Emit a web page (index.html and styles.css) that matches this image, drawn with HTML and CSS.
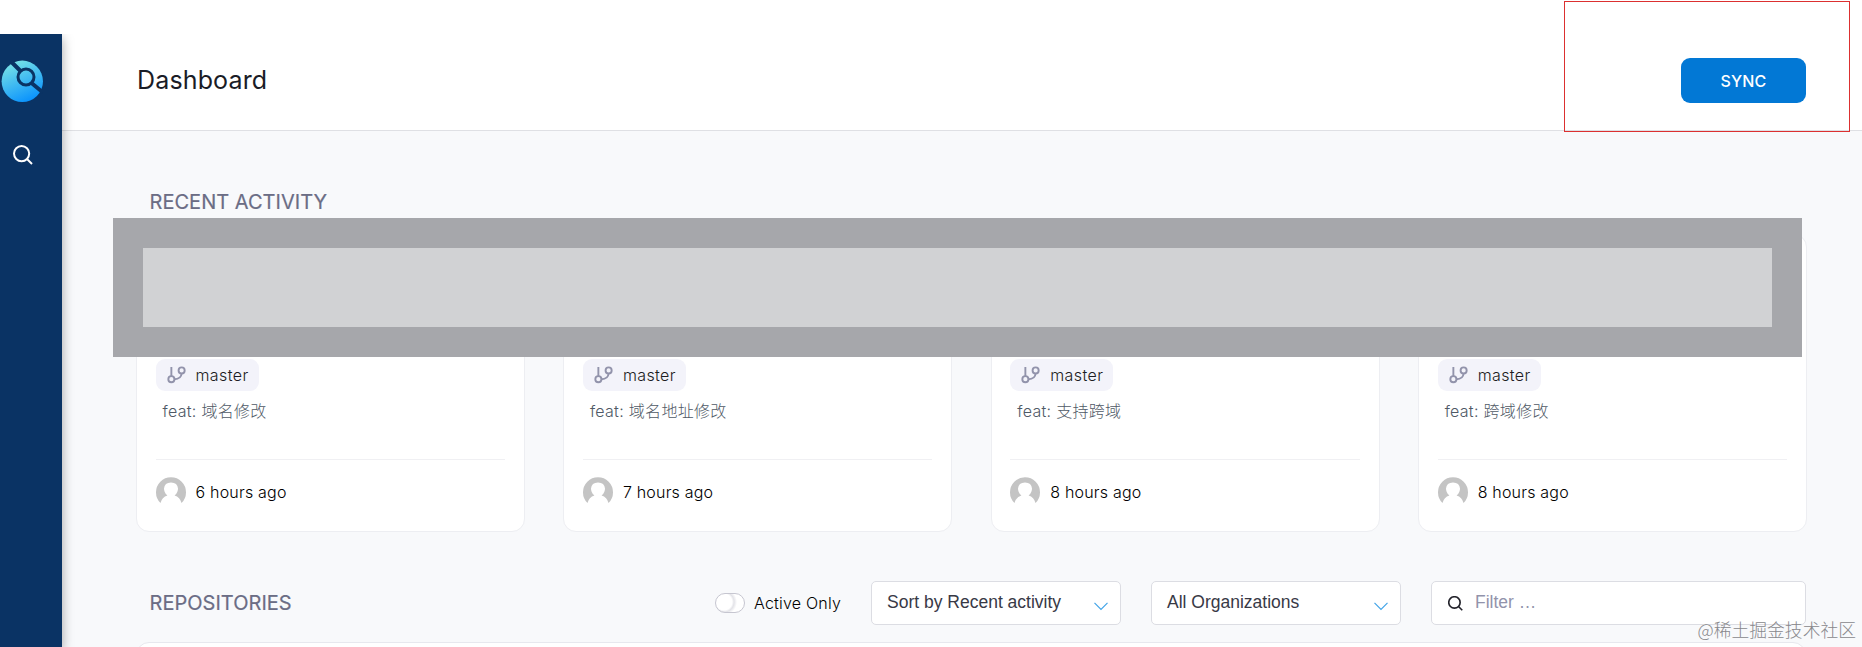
FILE: index.html
```html
<!DOCTYPE html>
<html lang="en">
<head>
<meta charset="utf-8">
<title>Dashboard</title>
<link rel="stylesheet" href="styles.css">
</head>
<body>
<svg class="defs" width="0" height="0">
  <symbol id="search" viewBox="0 0 20 20"><circle cx="8.6" cy="8.6" r="7.6"/><path d="M14 14l5 5"/></symbol>
  <symbol id="branch" viewBox="0 0 20 18"><circle cx="4.6" cy="13.4" r="3.2"/><circle cx="15.4" cy="4.2" r="3.2"/><path d="M4.6 0.5v9.7M7.8 13.4c4.4-.2 7.3-2.6 7.6-6"/></symbol>
  <symbol id="avatar" viewBox="0 0 30 30"><path fill="#c4c4c4" d="M4.5 26A15 15 0 1 1 25.5 26Q24 20 18.6 18.5C21.400 16 22 13.500 22 11.500Q21.500 5.500 15 5.500T8 11.500C8 13.500 8.600 16 11.400 18.500Q6 20 4.500 26Z"/></symbol>
  <symbol id="chevron" viewBox="0 0 14 9"><path d="M.5.8L7 7.500L13.500.8"/></symbol>
</svg>
<div class="app">
  <nav class="sidebar">
    <svg class="logo" viewBox="0 0 42 42">
      <defs><linearGradient id="lg" x1="0.2" y1="0.1" x2="0.6" y2="1"><stop offset="0" stop-color="#73dfe7"/><stop offset="1" stop-color="#0a93fd"/></linearGradient></defs>
      <circle cx="21.300" cy="21.300" r="20.700" fill="url(#lg)"/>
      <g fill="none" stroke="#0a3364" stroke-width="3"><circle cx="25" cy="17" r="8"/><path d="M10 1.500L19.500 11M30.500 23L42 32.500" stroke-width="4"/></g>
    </svg>
    <svg class="nav-search icon"><use href="#search"/></svg>
  </nav>
  <main class="main">
    <header class="header">
      <h1>Dashboard</h1>
      <button class="sync">SYNC</button>
    </header>
    <section class="recent">
      <h2>RECENT ACTIVITY</h2>
      <div class="cards">
        <article class="card">
          <span class="branch"><svg class="branch-icon icon"><use href="#branch"/></svg>master</span>
          <p>feat: 域名修改</p>
          <footer><svg class="avatar"><use href="#avatar"/></svg>6 hours ago</footer>
        </article>
        <article class="card">
          <span class="branch"><svg class="branch-icon icon"><use href="#branch"/></svg>master</span>
          <p>feat: 域名地址修改</p>
          <footer><svg class="avatar"><use href="#avatar"/></svg>7 hours ago</footer>
        </article>
        <article class="card">
          <span class="branch"><svg class="branch-icon icon"><use href="#branch"/></svg>master</span>
          <p>feat: 支持跨域</p>
          <footer><svg class="avatar"><use href="#avatar"/></svg>8 hours ago</footer>
        </article>
        <article class="card">
          <span class="branch"><svg class="branch-icon icon"><use href="#branch"/></svg>master</span>
          <p>feat: 跨域修改</p>
          <footer><svg class="avatar"><use href="#avatar"/></svg>8 hours ago</footer>
        </article>
      </div>
    </section>
    <section class="repos">
      <div class="toolbar">
        <h2>REPOSITORIES</h2>
        <label class="toggle"><span class="switch"></span>Active Only</label>
        <div class="select">Sort by Recent activity<svg class="chevron icon"><use href="#chevron"/></svg></div>
        <div class="select">All Organizations<svg class="chevron icon"><use href="#chevron"/></svg></div>
        <div class="filter"><svg class="filter-icon icon"><use href="#search"/></svg>Filter …</div>
      </div>
      <div class="list"></div>
    </section>
  </main>
</div>
<div class="mask"></div>
<div class="highlight"></div>
<div class="watermark">@稀土掘金技术社区</div>
</body>
</html>
```
FILE: styles.css
```css
* { box-sizing: border-box; }
body {
  margin: 0;
  height: 647px;
  overflow: hidden;
  position: relative;
  background: #fff;
  color: #1a1c26;
  font-family: Inter, "Noto Sans CJK SC", sans-serif;
}
h1, h2, p { margin: 0; font-weight: 400; }
.defs { position: absolute; }
.icon { fill: none; stroke: currentColor; }
.app { display: flex; height: 100%; padding-top: 34px; }
.sidebar {
  width: 62px;
  flex: none;
  padding: 26px 0 0 1px;
  background: #0a3364;
  color: #fff;
  box-shadow: 0 4px 11px rgba(0, 0, 0, .35);
  clip-path: inset(0 -20px 0 0);
  z-index: 1;
}
.logo { display: block; width: 42px; height: 42px; }
.nav-search { display: block; width: 20px; height: 20px; margin: 43px 0 0 11.500px; stroke-width: 2; }
.main { flex: 1; min-width: 0; background: #f8f9fb; overflow: hidden; }
.header {
  display: flex;
  align-items: center;
  justify-content: space-between;
  height: 97px;
  padding: 0 56px 3px 75px;
  background: #fff;
  border-bottom: 1px solid #dfe0e4;
}
h1 { font-size: 25px; letter-spacing: .15px; padding-bottom: 2px; }
.sync {
  width: 125px;
  height: 45px;
  border: 0;
  border-radius: 9px;
  background: #0278d5;
  color: #fff;
  font: 500 16px Inter, sans-serif;
  letter-spacing: .15px;
}
.recent { padding: 59px 55px 0 74px; }
h2 { font-size: 20px; line-height: 24px; color: #6b6d85; padding-left: 13.500px; letter-spacing: .03px; -webkit-text-stroke: .2px; }
.recent h2 { margin-bottom: 20px; }
.cards { display: grid; grid-template-columns: repeat(4, 1fr); gap: 38.500px; }
.card {
  height: 298px;
  padding: 124px 19px 0 18.500px;
  background: #fff;
  border: 1px solid #edeef2;
  border-radius: 13px;
}
.branch {
  display: flex;
  align-items: center;
  width: 103px;
  height: 32px;
  padding-left: 11px;
  gap: 10px;
  border-radius: 9px;
  background: #f3f3fa;
  font-size: 16px;
  font-weight: 300;
  letter-spacing: .4px;
  color: #1c1c22;
}
.branch-icon { width: 19px; height: 18px; stroke: #9293ab; stroke-width: 2; }
.card p { height: 68px; padding: 8px 0 0 7px; font-size: 16px; line-height: 24px; font-weight: 300; letter-spacing: .3px; color: #4f5966; }
.card footer {
  display: flex;
  align-items: center;
  gap: 10px;
  padding-top: 17px;
  border-top: 1px solid #f0f0f3;
  font-size: 16px;
  font-weight: 300;
  letter-spacing: .2px;
  color: #000;
}
.avatar { width: 30px; height: 30px; }
.repos { padding: 48px 56px 0 74px; }
.toolbar { display: flex; align-items: center; height: 45px; }
.toolbar h2 { flex: 1; }
.toggle { display: flex; align-items: center; gap: 9px; margin-right: 30px; font-size: 16px; font-weight: 300; letter-spacing: .2px; color: #000; }
.switch {
  width: 30px;
  height: 20px;
  border: 1px solid #c6c6d0;
  border-radius: 10px;
  background: radial-gradient(circle at 8px 8px, #fff 8px, #e3e3e8 10px, #fff 13px);
}
.select {
  display: flex;
  align-items: center;
  justify-content: space-between;
  width: 250px;
  height: 44px;
  margin-right: 30px;
  padding: 0 12px 1px 15px;
  background: #fff;
  border: 1px solid #dcdde3;
  border-radius: 5px;
  color: #383946;
  font: 17.5px "Liberation Sans", sans-serif;
}
.chevron { width: 14px; height: 9px; margin-top: 8px; stroke: #43a5e8; stroke-width: 1.2; }
.filter {
  display: flex;
  align-items: center;
  gap: 12px;
  width: 375px;
  height: 44px;
  padding: 0 15px 1px 16px;
  background: #fff;
  border: 1px solid #dcdde3;
  border-radius: 5px;
  color: #9293ab;
  font: 17.5px "Liberation Sans", sans-serif;
}
.filter-icon { width: 15px; height: 15px; margin-top: 2px; color: #22222a; stroke-width: 2.2; }
.list { height: 80px; margin: 17px 0 0; background: #fff; border: 1px solid #e7e8ee; border-radius: 13px; }
.mask {
  position: absolute;
  left: 113px;
  top: 218px;
  width: 1689px;
  height: 139px;
  border: 30px solid #a6a7ab;
  background: #d1d2d4;
}
.highlight { position: absolute; left: 1564px; top: 1px; width: 286px; height: 131px; border: 1px solid #dc3030; }
.watermark {
  position: absolute;
  right: 6px;
  bottom: 6px;
  font: 300 17.8px/24px "Noto Sans CJK SC", sans-serif;
  color: #88888c;
}
```
